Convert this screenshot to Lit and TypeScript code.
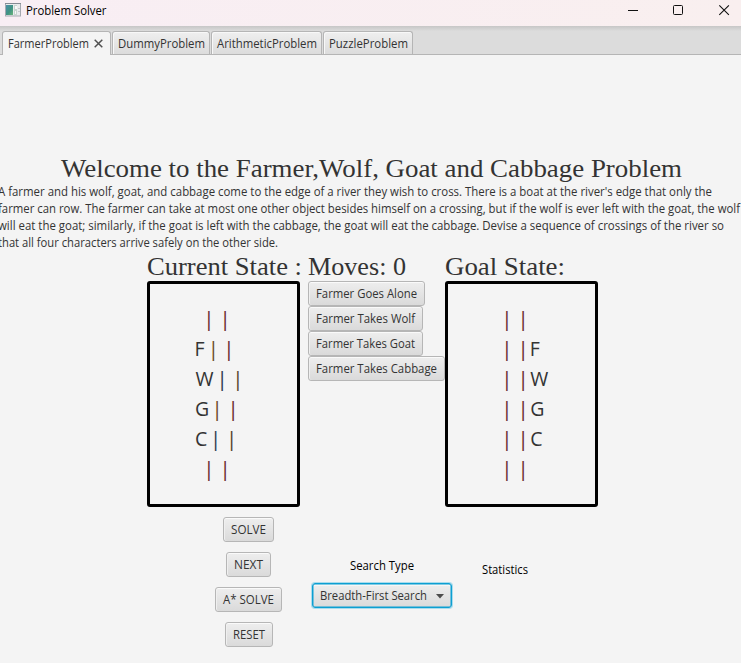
import { LitElement, html, svg, css } from "lit";
import { customElement, property, state } from "lit/decorators.js";

/** A single line of text set to an exact advance width. */
@customElement("fit-text")
class FitText extends LitElement {
  static styles = css`
    :host { display: block; flex: none; }
    svg { display: block; overflow: visible; }
    text { fill: currentColor; white-space: pre; }
  `;
  @property() text = "";
  @property({ type: Number }) w = 100;
  @property({ type: Number }) h = 17;
  @property({ type: Number }) base = 13;
  render() {
    return html`<svg width=${this.w} height=${this.h}>
      <text x="0" y=${this.base} textLength=${this.w} lengthAdjust="spacingAndGlyphs">${this.text}</text>
    </svg>`;
  }
}

interface Row { label?: string; lx?: number; bars: [number, number]; tint: [string, string]; }

const RED = "#6a2c30";
const BROWN = "#6b4a2a";
const NAVY = "#2f3b52";
const OLIVE = "#54452c";

/** One bank-river-bank diagram inside a black frame. */
@customElement("state-box")
class StateBox extends LitElement {
  static styles = css`
    :host { display: block; box-sizing: border-box; width: 153px; height: 226px; border: 3px solid #000; border-radius: 3px; }
    svg { display: block; }
    text { font: 19.5px "Open Sans", "Noto Sans", sans-serif; fill: #333; }
    .letter { font-weight: 400; }
    .bar { text-anchor: middle; font-family: "Noto Sans", sans-serif; font-weight: 400; }
  `;
  @property({ attribute: false }) rows: Row[] = [];
  render() {
    return html`<svg width="147" height="220">
      ${this.rows.map((r, i) => {
        const y = 42 + i * 30;
        return svg`
          ${r.label ? svg`<text class="letter" x=${r.lx ?? 0} y=${y}>${r.label}</text>` : ""}
          ${r.bars.map((x, k) => svg`<text class="bar" x=${x} y=${y} style="fill:${r.tint[k]}">|</text>`)}
        `;
      })}
    </svg>`;
  }
}

@customElement("app-root")
class AppRoot extends LitElement {
  static styles = css`
    :host {
      display: flex; flex-direction: column; width: 741px; height: 665px; overflow: hidden;
      background: #fff; color: #333; font: 12px "Open Sans", "Noto Sans", sans-serif;
    }
    .titlebar { display: flex; flex: none; height: 26px; background: linear-gradient(90deg, #f8eef4, #f9efef); color: #000; }
    .appicon { margin: 3px 0 0 5px; flex: none; }
    .title { margin: 2px auto 0 5px; }
    .controls { flex: none; }
    .tabs {
      display: flex; flex: none; box-sizing: border-box; height: 29px; padding: 5px 0 0 2px; gap: 1px;
      background: linear-gradient(#c6c6c6, #dcdcdc 5px); border-bottom: 1px solid #b5b5b5;
    }
    .tab {
      display: flex; box-sizing: border-box; height: 23px; padding: 3px 0 0 5px;
      border: 1px solid #b5b5b5; border-bottom: none; border-radius: 3px 3px 0 0;
      background: linear-gradient(#efefef, #dcdcdc); box-shadow: inset 1px 1px 0 #f8f8f8;
    }
    .tab.active { height: 24px; background: #f4f4f4; box-shadow: none; }
    .t0 { width: 109px; } .t1 { width: 98px; } .t2 { width: 111px; } .t3 { width: 90px; }
    .close { margin: 4px 0 0 5px; }
    .content { flex: none; box-sizing: border-box; height: 608px; padding-top: 100px; background: #f4f4f4; }
    .serif { font: 26px "Liberation Serif", serif; }
    .heading { margin-left: 61px; }
    .para { margin-left: -2px; }
    .boards { display: flex; padding-left: 147px; }
    .col { flex: none; }
    .cur { width: 161px; } .moves { width: 137px; }
    .btn {
      display: flex; justify-content: center; box-sizing: border-box; height: 25px; width: fit-content;
      padding: 3px 7px 0; border: 1px solid #b6b6b6; border-radius: 3px;
      background: linear-gradient(#eeeeee, #dadada); box-shadow: inset 0 1px 0 #fafafa, inset 1px 0 0 #efefef;
    }
    .lower { display: flex; padding: 10px 0 0 215px; gap: 30px; }
    .actions { display: flex; flex-direction: column; align-items: center; gap: 10px; width: 67px; }
    .search { width: 140px; padding-top: 40px; color: #000; }
    .search-label { margin: 0 0 9px 38px; }
    .combo {
      display: flex; box-sizing: border-box; width: 140px; height: 25px; padding: 3px 0 0 7px; color: #333;
      border: 1px solid #0c9fd2; border-radius: 3px; background: linear-gradient(#eeeeee, #dadada);
      box-shadow: 0 0 0 1px #a9dced, inset 0 0 0 .5px #0c9fd2, inset 0 2px 0 #f6f6f6;
    }
    .arrow { margin: 7px 0 0 9px; }
    .stats { padding-top: 44px; color: #000; }
  `;

  @state() private tabs = [
    { name: "FarmerProblem", w: 81 },
    { name: "DummyProblem", w: 87 },
    { name: "ArithmeticProblem", w: 100 },
    { name: "PuzzleProblem", w: 79 },
  ];
  @state() private moves = [
    { name: "Farmer Goes Alone", w: 101 },
    { name: "Farmer Takes Wolf", w: 99 },
    { name: "Farmer Takes Goat", w: 99 },
    { name: "Farmer Takes Cabbage", w: 121 },
  ];
  @state() private actions = [
    { name: "SOLVE", w: 35 },
    { name: "NEXT", w: 29 },
    { name: "A* SOLVE", w: 51 },
    { name: "RESET", w: 32 },
  ];
  private para = [
    { t: "A farmer and his wolf, goat, and cabbage come to the edge of a river they wish to cross. There is a boat at the river's edge that only the", w: 714 },
    { t: "farmer can row. The farmer can take at most one other object besides himself on a crossing, but if the wolf is ever left with the goat, the wolf", w: 742 },
    { t: "will eat the goat; similarly, if the goat is left with the cabbage, the goat will eat the cabbage. Devise a sequence of crossings of the river so", w: 726 },
    { t: "that all four characters arrive safely on the other side.", w: 280 },
  ];
  private current: Row[] = [
    { bars: [58.8, 75], tint: [RED, RED] },
    { label: "F", lx: 44.6, bars: [63.4, 78.8], tint: [BROWN, RED] },
    { label: "W", lx: 45.6, bars: [72, 87.8], tint: [NAVY, OLIVE] },
    { label: "G", lx: 44.9, bars: [67.2, 83], tint: [BROWN, RED] },
    { label: "C", lx: 44.9, bars: [65.7, 81.6], tint: [NAVY, OLIVE] },
    { bars: [58.8, 75], tint: [RED, RED] },
  ];
  private goal: Row[] = ["", "F", "W", "G", "C", ""].map((label) => ({
    label, lx: label === "F" ? 81.7 : 82.3, bars: [58.8, 75] as [number, number], tint: [RED, RED] as [string, string],
  }));

  render() {
    return html`
      <div class="titlebar">
        <svg class="appicon" width="16" height="14">
          <defs><linearGradient id="g" x2="1" y2="1"><stop offset="0" stop-color="#4b8fa8" /><stop offset=".55" stop-color="#3f9283" /><stop offset="1" stop-color="#69b57a" /></linearGradient></defs>
          <rect x=".5" y=".5" width="15" height="12.5" fill="#e9ebed" stroke="#a5a9b0" />
          <path d="M0 .5h16" stroke="#858b94" />
          <rect x="1" y="2" width="7" height="10" fill="url(#g)" />
          <rect x="9" y="2" width="3" height="10" fill="#c8d4d0" />
          <path d="M10 3h2v3h-2zM10 8h1v3h-1z" fill="#f8f8f8" />
          <path d="M13 5.5h2M13 8.5h2" stroke="#c5c8cb" />
        </svg>
        <fit-text class="title" text="Problem Solver" .w=${80.5} .base=${13}></fit-text>
        <svg class="controls" width="115" height="26" fill="none" stroke="#111" stroke-width="1">
          <path d="M2 10.5h10" />
          <rect x="47.5" y="5.5" width="9" height="9" rx="1" />
          <path d="M93.3 5.3l9.6 9.6M102.9 5.3l-9.6 9.6" stroke-width="1.1" />
        </svg>
      </div>
      <div class="tabs">
        ${this.tabs.map((t, i) => html`<div class="tab t${i} ${i === 0 ? "active" : ""}">
          <fit-text .text=${t.name} .w=${t.w}></fit-text>
          ${i === 0 ? html`<svg class="close" width="9" height="9" stroke="#505050" stroke-width="1.5"><path d="M.7.7l7.6 7.6M8.3.7L.7 8.3" /></svg>` : ""}
        </div>`)}
      </div>
      <div class="content">
        <fit-text class="serif heading" text="Welcome to the Farmer,Wolf, Goat and Cabbage Problem" .w=${621} .h=${28} .base=${22}></fit-text>
        <div class="para">${this.para.map((l) => html`<fit-text .text=${l.t} .w=${l.w}></fit-text>`)}</div>
        <div class="boards">
          <div class="col cur">
            <fit-text class="serif" text="Current State :" .w=${155} .h=${30} .base=${24}></fit-text>
            <state-box .rows=${this.current}></state-box>
          </div>
          <div class="col moves">
            <fit-text class="serif" text="Moves: 0" .w=${98} .h=${30} .base=${24}></fit-text>
            ${this.moves.map((m) => html`<div class="btn"><fit-text .text=${m.name} .w=${m.w}></fit-text></div>`)}
          </div>
          <div class="col">
            <fit-text class="serif" text="Goal State:" .w=${120} .h=${30} .base=${24}></fit-text>
            <state-box .rows=${this.goal}></state-box>
          </div>
        </div>
        <div class="lower">
          <div class="actions">
            ${this.actions.map((a) => html`<div class="btn"><fit-text .text=${a.name} .w=${a.w}></fit-text></div>`)}
          </div>
          <div class="search">
            <fit-text class="search-label" text="Search Type" .w=${64}></fit-text>
            <div class="combo">
              <fit-text text="Breadth-First Search" .w=${107}></fit-text>
              <svg class="arrow" width="8" height="5"><path d="M0 0h8L4 4.5z" fill="#4c4c4c" /></svg>
            </div>
          </div>
          <fit-text class="stats" text="Statistics" .w=${46}></fit-text>
        </div>
      </div>
    `;
  }
}
